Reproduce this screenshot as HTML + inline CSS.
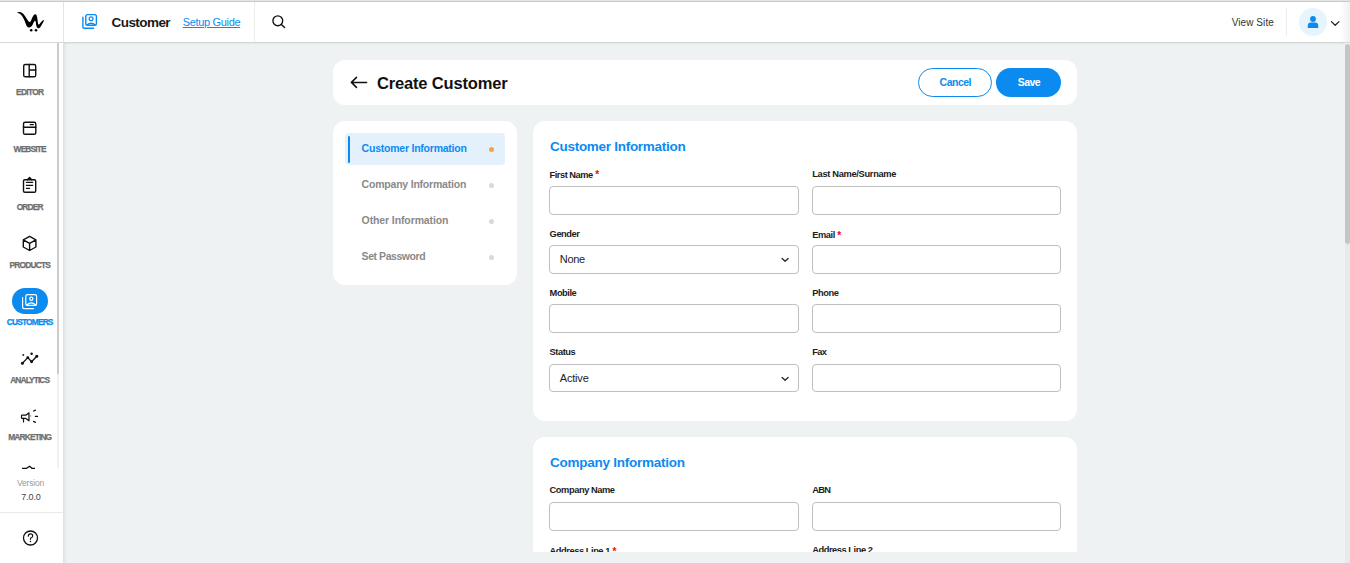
<!DOCTYPE html>
<html><head><meta charset="utf-8"><title>Create Customer</title>
<style>
*{margin:0;padding:0;box-sizing:border-box}
html,body{width:1350px;height:563px;overflow:hidden;background:#eef2f3;font-family:"Liberation Sans",sans-serif}
.t{position:absolute;white-space:nowrap}
.abs{position:absolute}
svg{position:absolute;overflow:visible}
</style></head>
<body>
<div class="abs" style="left:0;top:0;width:1350px;height:1px;background:#e5e5e5"></div>
<div class="abs" style="left:0;top:1px;width:1350px;height:1px;background:#c9c9ca"></div>
<div class="abs" style="left:0;top:2px;width:1350px;height:40px;background:#fff"></div>
<div class="abs" style="left:0;top:42px;width:1350px;height:1px;background:#d5d8d9"></div>
<div class="abs" style="left:64px;top:43px;width:1281px;height:1px;background:#e3e6e7"></div>
<div class="abs" style="left:63px;top:2px;width:1px;height:40px;background:#e3e3e3"></div>
<div class="abs" style="left:254px;top:2px;width:1px;height:40px;background:#ececec"></div>
<svg style="left:0;top:0" width="64" height="42" viewBox="0 0 64 42">
<path d="M17.20,12.70 Q17.20,12.50 17.75,12.25 Q18.30,12.00 19.50,12.05 Q20.70,12.10 21.85,12.80 Q23.00,13.50 24.00,14.70 Q25.00,15.90 25.95,17.45 Q26.90,19.00 27.70,20.15 Q28.50,21.30 29.00,21.70 Q29.50,22.10 30.00,21.90 Q30.50,21.70 31.05,20.55 Q31.60,19.40 32.20,17.85 Q32.80,16.30 33.60,15.30 Q34.40,14.30 34.95,14.20 Q35.50,14.10 36.10,14.60 Q36.70,15.10 37.00,16.45 Q37.30,17.80 37.50,19.55 Q37.70,21.30 37.90,22.70 Q38.10,24.10 38.50,24.45 Q38.90,24.80 39.55,24.05 Q40.20,23.30 41.20,22.10 Q42.20,20.90 42.95,20.35 Q43.70,19.80 43.90,20.15 Q44.10,20.50 43.55,21.50 Q43.00,22.50 42.20,24.05 Q41.40,25.60 40.40,26.90 Q39.40,28.20 38.65,28.30 Q37.90,28.40 37.30,27.80 Q36.70,27.20 36.40,26.00 Q36.10,24.80 35.90,23.25 Q35.70,21.70 35.40,21.10 Q35.10,20.50 34.55,21.10 Q34.00,21.70 33.40,23.10 Q32.80,24.50 32.20,25.45 Q31.60,26.40 30.65,27.00 Q29.70,27.60 28.70,27.40 Q27.70,27.20 27.05,26.40 Q26.40,25.60 25.90,24.25 Q25.40,22.90 24.80,21.35 Q24.20,19.80 23.40,18.20 Q22.60,16.60 21.65,15.45 Q20.70,14.30 19.70,13.70 Q18.70,13.10 17.95,13.00 Q17.20,12.90 17.20,12.70 Z" fill="#000"/>
<circle cx="31.2" cy="30.3" r="1.25" fill="#000"/><circle cx="36" cy="30.3" r="1.25" fill="#000"/>
</svg>
<svg style="left:0;top:0" width="110" height="42" viewBox="0 0 110 42">
<rect x="85.8" y="14.6" width="10.6" height="10.6" rx="1.8" fill="none" stroke="#0b8bf0" stroke-width="1.4"/>
<path d="M82.9,17.3 V27 Q82.9,28.2 84.1,28.2 H93.6" fill="none" stroke="#0b8bf0" stroke-width="1.4" stroke-linecap="round"/>
<circle cx="91.1" cy="18.7" r="1.9" fill="none" stroke="#0b8bf0" stroke-width="1.3"/>
<path d="M86.8,24.9 Q91.1,21.6 95.4,24.9" fill="none" stroke="#0b8bf0" stroke-width="1.3"/>
</svg>
<div class="t" style="left:111.50px;top:15.57px;font-size:13.5px;line-height:13.5px;font-weight:700;color:#1a1a1a;letter-spacing:-0.56px;">Customer</div>
<div class="t" style="left:182.70px;top:16.69px;font-size:11px;line-height:11px;font-weight:400;color:#0b8bf0;letter-spacing:-0.33px;text-decoration:underline;text-underline-offset:1px">Setup Guide</div>
<svg style="left:0;top:0" width="300" height="42" viewBox="0 0 300 42">
<circle cx="277.8" cy="20.8" r="4.9" fill="none" stroke="#111" stroke-width="1.35"/>
<path d="M281.4,24.4 L284.6,27.6" stroke="#111" stroke-width="1.4" stroke-linecap="round"/>
</svg>
<div class="t" style="left:1231.70px;top:17.54px;font-size:10px;line-height:10px;font-weight:400;color:#333;letter-spacing:0.08px;">View Site</div>
<div class="abs" style="left:1286px;top:8px;width:1px;height:28px;background:#ececec"></div>
<div class="abs" style="left:1340px;top:2px;width:10px;height:40px;background:linear-gradient(90deg,rgba(0,0,0,0),rgba(0,0,0,0.06))"></div>
<div class="abs" style="left:1299px;top:8px;width:28px;height:28px;border-radius:50%;background:#e6f4fe"></div>
<svg style="left:0;top:0" width="1350" height="42" viewBox="0 0 1350 42">
<circle cx="1313" cy="19" r="2.9" fill="#0b8bf0"/>
<path d="M1307.8,28.1 V25.6 Q1307.8,22.6 1310.8,22.6 H1315.2 Q1318.2,22.6 1318.2,25.6 V28.1 Z" fill="#0b8bf0"/>
<path d="M1331.4,21.6 L1335.2,25.3 L1339,21.6" fill="none" stroke="#222" stroke-width="1.3" stroke-linecap="round" stroke-linejoin="round"/>
</svg>
<div class="abs" style="left:0;top:43px;width:63px;height:520px;background:#fff"></div>
<div class="abs" style="left:63px;top:43px;width:1px;height:520px;background:#dfe3e4"></div>
<div class="abs" style="left:64px;top:43px;width:3px;height:520px;background:linear-gradient(90deg,rgba(0,20,30,0.06),rgba(0,20,30,0))"></div>
<div class="abs" style="left:57px;top:43px;width:2px;height:425px;background:#f1f1f1"></div>
<div class="abs" style="left:57px;top:43px;width:2px;height:331px;background:#cdcacd"></div>
<div class="t" style="left:-0.30px;width:60px;text-align:center;top:87.69px;font-size:8.4px;line-height:8.4px;font-weight:700;color:#6f6f6f;letter-spacing:-0.7px;-webkit-text-stroke:0.25px #6f6f6f">EDITOR</div>
<div class="t" style="left:-0.30px;width:60px;text-align:center;top:144.59px;font-size:8.4px;line-height:8.4px;font-weight:700;color:#6f6f6f;letter-spacing:-0.84px;-webkit-text-stroke:0.25px #6f6f6f">WEBSITE</div>
<div class="t" style="left:-0.30px;width:60px;text-align:center;top:202.59px;font-size:8.4px;line-height:8.4px;font-weight:700;color:#6f6f6f;letter-spacing:-0.85px;-webkit-text-stroke:0.25px #6f6f6f">ORDER</div>
<div class="t" style="left:-0.30px;width:60px;text-align:center;top:260.59px;font-size:8.4px;line-height:8.4px;font-weight:700;color:#6f6f6f;letter-spacing:-0.8px;-webkit-text-stroke:0.25px #6f6f6f">PRODUCTS</div>
<div class="t" style="left:-0.30px;width:60px;text-align:center;top:317.59px;font-size:8.4px;line-height:8.4px;font-weight:700;color:#0b8bf0;letter-spacing:-0.84px;-webkit-text-stroke:0.25px #0b8bf0">CUSTOMERS</div>
<div class="t" style="left:-0.30px;width:60px;text-align:center;top:375.59px;font-size:8.4px;line-height:8.4px;font-weight:700;color:#6f6f6f;letter-spacing:-0.91px;-webkit-text-stroke:0.25px #6f6f6f">ANALYTICS</div>
<div class="t" style="left:-0.30px;width:60px;text-align:center;top:432.89px;font-size:8.4px;line-height:8.4px;font-weight:700;color:#6f6f6f;letter-spacing:-0.84px;-webkit-text-stroke:0.25px #6f6f6f">MARKETING</div>
<svg style="left:0;top:0" width="64" height="563" viewBox="0 0 64 563">
<g fill="none" stroke="#111" stroke-width="1.4" stroke-linecap="round" stroke-linejoin="round">
 <rect x="23.7" y="64.5" width="12" height="12.3" rx="1.6"/>
 <path d="M29.2,64.5 V76.8 M29.2,70 H35.7"/>
 <rect x="23.5" y="122.3" width="12.3" height="12" rx="1.6"/>
 <path d="M23.5,127.3 H35.8"/>
 <path d="M30.2,124.6 H33.4" stroke-width="1.2"/>
 <rect x="23.5" y="179.7" width="12.2" height="12.6" rx="1.4"/>
 <path d="M27.5,179.7 L29.6,177.5 L31.7,179.7"/>
 <path d="M26.4,182.4 H32.6 M26.4,185.4 H32.6 M26.4,188.4 H29.6" stroke-width="1.2"/>
 <path d="M29.6,236.3 L35.9,239.8 V247 L29.6,250.5 L23.3,247 V239.8 Z M23.3,239.8 L29.6,243.4 L35.9,239.8 M29.6,243.4 V250.5"/>
</g>
<rect x="12" y="288" width="36" height="26" rx="13" fill="#0b8bf0"/>
<g fill="none" stroke="#fff" stroke-width="1.2" stroke-linecap="round">
 <rect x="25.8" y="294.7" width="10.8" height="10.6" rx="1.6"/>
 <path d="M22.6,297.7 V307.2 Q22.6,308.6 24,308.6 H33.5"/>
 <circle cx="31.3" cy="298.7" r="1.6"/>
 <path d="M26.8,305 Q31.3,300.6 35.6,305"/>
</g>
<g fill="#111" stroke="#111" stroke-width="1.3" stroke-linecap="round" stroke-linejoin="round">
 <path d="M22.4,363.3 L27.8,357.6 L31.6,361.8 L36.8,356.2" fill="none"/>
 <circle cx="22.4" cy="363.3" r="0.9"/><circle cx="27.8" cy="357.6" r="0.8"/><circle cx="31.6" cy="361.8" r="0.8"/><circle cx="36.8" cy="356.2" r="0.9"/>
 <circle cx="23.3" cy="355" r="0.3"/><circle cx="31.6" cy="353.7" r="0.6"/>
</g>
<g fill="none" stroke="#111" stroke-width="1.2" stroke-linecap="round" stroke-linejoin="round">
 <path d="M22,415.2 H25.8 L29,412.8 V420.8 L25.8,418.4 H22 Q21.5,418.4 21.5,417.8 V415.8 Q21.5,415.2 22,415.2 Z"/>
 <path d="M23.5,418.4 V422"/>
 <path d="M33.6,411 L35.4,410.2 M35.4,416.4 H37.5 M33.6,421.4 L35.4,422.3" stroke-width="1.3"/>
</g>
<path d="M30.5,416.8 Q31.4,416 30.5,415.2" stroke="#999" stroke-width="1" fill="none"/>
<path d="M22,468.3 H26.5 L29.6,466.2 L32,468.3 H35" fill="none" stroke="#111" stroke-width="1.2"/>
</svg>
<div class="abs" style="left:0;top:470px;width:63px;height:42px;background:#fff"></div>
<div class="t" style="left:0.50px;width:60px;text-align:center;top:478.90px;font-size:8.5px;line-height:8.5px;font-weight:400;color:#9a9a9a;letter-spacing:-0.16px;">Version</div>
<div class="t" style="left:1.00px;width:60px;text-align:center;top:492.88px;font-size:9px;line-height:9px;font-weight:400;color:#444;letter-spacing:-0.1px;">7.0.0</div>
<div class="abs" style="left:0;top:512px;width:63px;height:1px;background:#e6eaeb"></div>
<svg style="left:0;top:0" width="64" height="563" viewBox="0 0 64 563">
<circle cx="30.5" cy="538" r="7" fill="none" stroke="#111" stroke-width="1.3"/>
<path d="M28.3,536.2 Q28.3,533.9 30.5,533.9 Q32.7,533.9 32.7,535.9 Q32.7,537.2 30.5,538.2 V539.3" fill="none" stroke="#111" stroke-width="1.2" stroke-linecap="round"/>
<circle cx="30.5" cy="541.6" r="0.75" fill="#111"/>
</svg>
<div class="abs" style="left:1345px;top:244px;width:5px;height:319px;background:#e9e9e9"></div>
<div class="abs" style="left:1345px;top:44px;width:5px;height:200px;border-radius:3px;background:#c6c5c6"></div>
<div class="abs" style="left:64px;top:43px;width:1281px;height:509px;overflow:hidden">
<div class="abs" style="left:269px;top:17px;width:744px;height:45px;background:#fff;border-radius:12px"></div>
<svg style="left:-64px;top:-43px" width="1350" height="563" viewBox="0 0 1350 563">
<path d="M366.6,82.4 H351.6 M356.5,77.4 L351.4,82.4 L356.5,87.4" fill="none" stroke="#111" stroke-width="1.5" stroke-linecap="round" stroke-linejoin="round"/>
</svg>
<div class="t" style="left:312.90px;top:32.33px;font-size:16.5px;line-height:16.5px;font-weight:700;color:#111;letter-spacing:-0.16px;">Create Customer</div>
<div class="abs" style="left:854px;top:25px;width:74px;height:29px;border:1px solid #0b8bf0;border-radius:15px;background:#fff"></div>
<div class="t" style="left:875.60px;top:34.11px;font-size:10.5px;line-height:10.5px;font-weight:700;color:#0b8bf0;letter-spacing:-0.5px;">Cancel</div>
<div class="abs" style="left:932px;top:25px;width:65px;height:29px;background:#0b8bf0;border-radius:15px"></div>
<div class="t" style="left:953.70px;top:34.11px;font-size:10.5px;line-height:10.5px;font-weight:700;color:#fff;letter-spacing:-0.5px;">Save</div>
<div class="abs" style="left:269px;top:78px;width:184px;height:164px;background:#fff;border-radius:12px"></div>
<div class="abs" style="left:281px;top:90px;width:160px;height:32px;background:#e4f1fd;border-radius:4px"></div>
<div class="abs" style="left:284px;top:93px;width:2px;height:27px;background:#0b8bf0;border-radius:1px"></div>
<div class="t" style="left:297.60px;top:100.11px;font-size:10.5px;line-height:10.5px;font-weight:700;color:#0b8bf0;letter-spacing:-0.23px;">Customer Information</div>
<div class="abs" style="left:425px;top:103.80000000000001px;width:5px;height:5px;background:#f7a14a;border-radius:50%"></div>
<div class="t" style="left:297.60px;top:136.31px;font-size:10.5px;line-height:10.5px;font-weight:700;color:#8a8a8a;letter-spacing:-0.21px;">Company Information</div>
<div class="abs" style="left:425px;top:139.8px;width:5px;height:5px;background:#d9d9d9;border-radius:50%"></div>
<div class="t" style="left:297.60px;top:172.41px;font-size:10.5px;line-height:10.5px;font-weight:700;color:#8a8a8a;letter-spacing:-0.11px;">Other Information</div>
<div class="abs" style="left:425px;top:175.8px;width:5px;height:5px;background:#d9d9d9;border-radius:50%"></div>
<div class="t" style="left:297.60px;top:208.11px;font-size:10.5px;line-height:10.5px;font-weight:700;color:#8a8a8a;letter-spacing:-0.44px;">Set Password</div>
<div class="abs" style="left:425px;top:211.8px;width:5px;height:5px;background:#d9d9d9;border-radius:50%"></div>
<div class="abs" style="left:469px;top:78px;width:544px;height:300px;background:#fff;border-radius:12px"></div>
<div class="t" style="left:486.00px;top:96.57px;font-size:13.5px;line-height:13.5px;font-weight:700;color:#0b8bf0;letter-spacing:-0.28px;">Customer Information</div>
<div class="t" style="left:485.60px;top:126.53px;font-size:9.3px;line-height:9.3px;font-weight:700;color:#1c1c1c;letter-spacing:-0.5px;">First Name<span style="color:#f00;letter-spacing:0;margin-left:2.5px;font-size:10px;position:relative;top:0.7px">*</span></div>
<div class="t" style="left:748.20px;top:126.53px;font-size:9.3px;line-height:9.3px;font-weight:700;color:#1c1c1c;letter-spacing:-0.32px;">Last Name/Surname</div>
<div class="abs" style="left:485px;top:143px;width:250px;height:29px;border:1px solid #bfbfbf;border-radius:4px;background:#fff"></div>
<div class="abs" style="left:748px;top:143px;width:249px;height:29px;border:1px solid #bfbfbf;border-radius:4px;background:#fff"></div>
<div class="t" style="left:485.60px;top:186.93px;font-size:9.3px;line-height:9.3px;font-weight:700;color:#1c1c1c;letter-spacing:-0.44999999999999996px;">Gender</div>
<div class="t" style="left:748.20px;top:186.93px;font-size:9.3px;line-height:9.3px;font-weight:700;color:#1c1c1c;letter-spacing:-0.43000000000000005px;">Email<span style="color:#f00;letter-spacing:0;margin-left:2.5px;font-size:10px;position:relative;top:0.7px">*</span></div>
<div class="abs" style="left:485px;top:202px;width:250px;height:29px;border:1px solid #bfbfbf;border-radius:4px;background:#fff"></div>
<div class="abs" style="left:748px;top:202px;width:249px;height:29px;border:1px solid #bfbfbf;border-radius:4px;background:#fff"></div>
<div class="t" style="left:485.60px;top:246.13px;font-size:9.3px;line-height:9.3px;font-weight:700;color:#1c1c1c;letter-spacing:-0.44999999999999996px;">Mobile</div>
<div class="t" style="left:748.20px;top:246.13px;font-size:9.3px;line-height:9.3px;font-weight:700;color:#1c1c1c;letter-spacing:-0.44999999999999996px;">Phone</div>
<div class="abs" style="left:485px;top:261px;width:250px;height:29px;border:1px solid #bfbfbf;border-radius:4px;background:#fff"></div>
<div class="abs" style="left:748px;top:261px;width:249px;height:29px;border:1px solid #bfbfbf;border-radius:4px;background:#fff"></div>
<div class="t" style="left:485.60px;top:305.33px;font-size:9.3px;line-height:9.3px;font-weight:700;color:#1c1c1c;letter-spacing:-0.44999999999999996px;">Status</div>
<div class="t" style="left:748.20px;top:305.33px;font-size:9.3px;line-height:9.3px;font-weight:700;color:#1c1c1c;letter-spacing:-0.65px;">Fax</div>
<div class="abs" style="left:485px;top:321px;width:250px;height:28px;border:1px solid #bfbfbf;border-radius:4px;background:#fff"></div>
<div class="abs" style="left:748px;top:321px;width:249px;height:28px;border:1px solid #bfbfbf;border-radius:4px;background:#fff"></div>
<div class="t" style="left:495.80px;top:211.49px;font-size:11px;line-height:11px;font-weight:400;color:#222;letter-spacing:-0.32px;">None</div>
<div class="t" style="left:495.80px;top:330.09px;font-size:11px;line-height:11px;font-weight:400;color:#222;letter-spacing:-0.19px;">Active</div>
<svg style="left:-64px;top:-43px" width="1350" height="563" viewBox="0 0 1350 563">
<path d="M782.1,258.4 L785.1,261.3 L788.1,258.4 M782.1,377.4 L785.1,380.3 L788.1,377.4" fill="none" stroke="#2a2a2a" stroke-width="1.35" stroke-linecap="round" stroke-linejoin="round"/>
</svg>
<div class="abs" style="left:469px;top:394px;width:544px;height:200px;background:#fff;border-radius:12px"></div>
<div class="t" style="left:486.00px;top:412.57px;font-size:13.5px;line-height:13.5px;font-weight:700;color:#0b8bf0;letter-spacing:-0.25px;">Company Information</div>
<div class="t" style="left:485.60px;top:442.73px;font-size:9.3px;line-height:9.3px;font-weight:700;color:#1c1c1c;letter-spacing:-0.43999999999999995px;">Company Name</div>
<div class="t" style="left:748.20px;top:442.73px;font-size:9.3px;line-height:9.3px;font-weight:700;color:#1c1c1c;letter-spacing:-0.7000000000000001px;">ABN</div>
<div class="abs" style="left:485px;top:459px;width:250px;height:29px;border:1px solid #bfbfbf;border-radius:4px;background:#fff"></div>
<div class="abs" style="left:748px;top:459px;width:249px;height:29px;border:1px solid #bfbfbf;border-radius:4px;background:#fff"></div>
<div class="t" style="left:485.60px;top:502.83px;font-size:9.3px;line-height:9.3px;font-weight:700;color:#1c1c1c;letter-spacing:-0.44999999999999996px;">Address Line 1<span style="color:#f00;letter-spacing:0;margin-left:2.5px;font-size:10px;position:relative;top:0.7px">*</span></div>
<div class="t" style="left:748.20px;top:502.83px;font-size:9.3px;line-height:9.3px;font-weight:700;color:#1c1c1c;letter-spacing:-0.44999999999999996px;">Address Line 2</div>
</div>
</body></html>
